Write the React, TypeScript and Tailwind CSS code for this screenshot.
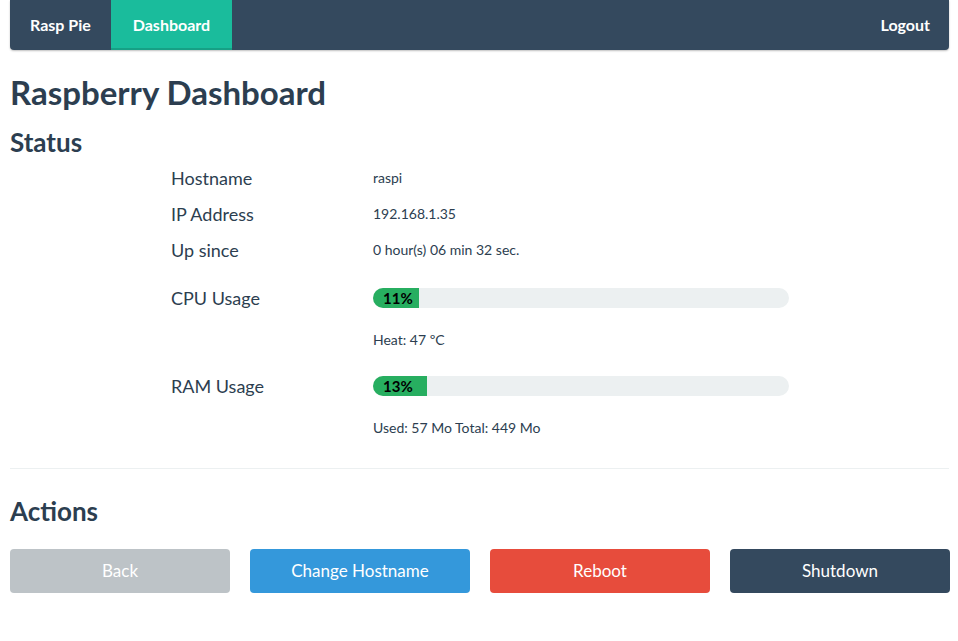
export default function App() {
  const info = [
    { label: "Hostname", value: "raspi" },
    { label: "IP Address", value: "192.168.1.35" },
    { label: "Up since", value: "0 hour(s) 06 min 32 sec." },
  ];

  const usage = [
    { label: "CPU Usage", percent: 11, note: "Heat: 47 ºC" },
    { label: "RAM Usage", percent: 13, note: "Used: 57 Mo Total: 449 Mo" },
  ];

  const buttons = [
    { label: "Back", cls: "bg-[#bdc3c7]" },
    { label: "Change Hostname", cls: "bg-[#3498db]" },
    { label: "Reboot", cls: "bg-[#e74c3c]" },
    { label: "Shutdown", cls: "bg-[#34495e]" },
  ];

  return (
    <div className="min-h-screen bg-white pl-[10px] text-[#2c3e50] font-['Lato',sans-serif]">
      <nav className="flex h-[50px] w-[939px] items-stretch rounded-b-[4px] bg-[#34495e] text-[16px] font-bold text-white shadow-[0_1px_2px_rgba(0,0,0,0.25)]">
        <a className="flex items-center px-5">Rasp Pie</a>
        <a className="flex items-center bg-[#1abc9c] px-[22px] shadow-[inset_0_-2px_0_#16a085]">Dashboard</a>
        <a className="ml-auto flex items-center pr-[19px] pl-5">Logout</a>
      </nav>

      <h1 className="mt-[25px] text-[33px] font-bold leading-[34px]">Raspberry Dashboard</h1>
      <h2 className="mt-[19px] text-[26px] font-bold leading-[28px]">Status</h2>

      <div className="mt-[4px] pl-[161px]">
        {info.map((row) => (
          <div key={row.label} className="flex h-9 items-center">
            <div className="w-[202px] text-[18px]">{row.label}</div>
            <div className="pb-[2px] text-[14px]">{row.value}</div>
          </div>
        ))}

        {usage.map((row, i) => (
          <div key={row.label} className={i === 0 ? "mt-[12px]" : "mt-[18px]"}>
            <div className="flex h-9 items-center">
              <div className="w-[202px] text-[18px]">{row.label}</div>
              <div className="h-5 w-[416px] overflow-hidden rounded-full bg-[#ecf0f1]">
                <div
                  className="flex h-full items-center bg-[#27ae60] pl-[10px] text-[15px] font-bold text-black"
                  style={{ width: `${row.percent}%` }}
                >
                  {row.percent}%
                </div>
              </div>
            </div>
            <div className="mt-[14px] pl-[202px] text-[14px] leading-5">{row.note}</div>
          </div>
        ))}
      </div>

      <hr className="mt-[30px] w-[939px] border-t border-[#ecf0f1]" />

      <h2 className="mt-[28px] text-[26px] font-bold leading-[28px]">Actions</h2>

      <div className="mt-[24px] grid w-[940px] grid-cols-4 gap-5">
        {buttons.map((b) => (
          <button key={b.label} className={`h-11 rounded-[4px] text-[17px] text-white ${b.cls}`}>
            {b.label}
          </button>
        ))}
      </div>
    </div>
  );
}
